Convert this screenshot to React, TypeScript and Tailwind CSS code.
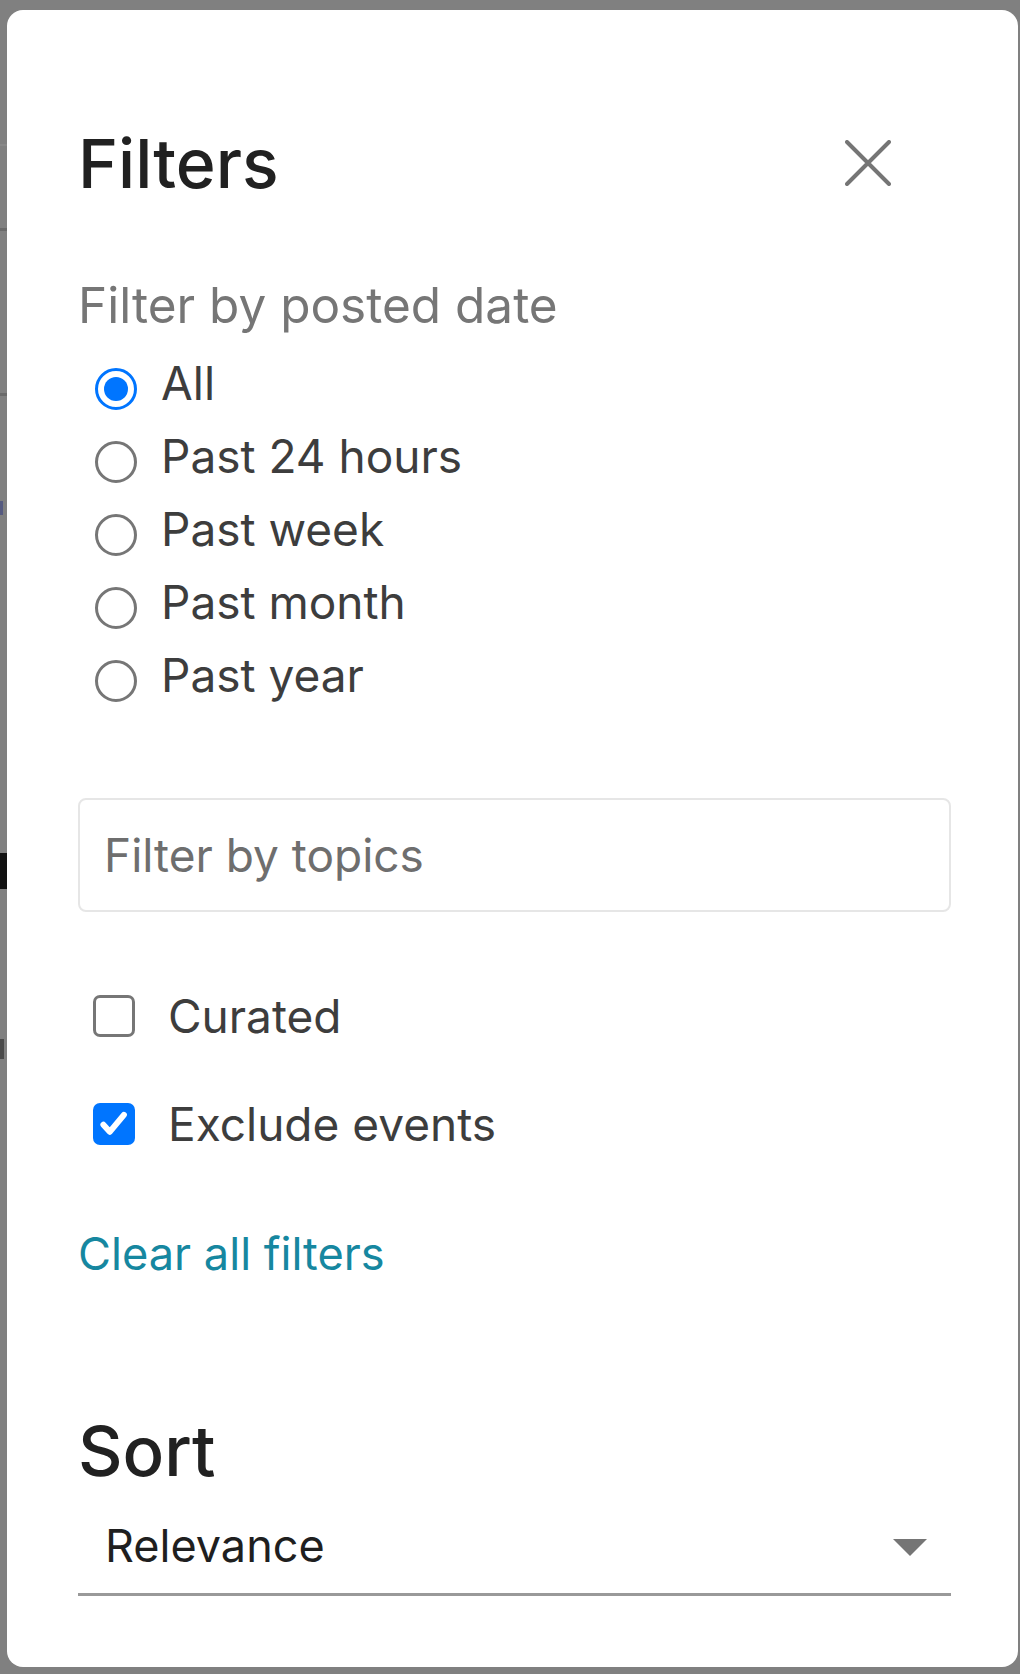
import { useState } from 'react';

const dateOptions = ['All', 'Past 24 hours', 'Past week', 'Past month', 'Past year'];

function Radio({ checked }: { checked: boolean }) {
  if (checked) {
    return (
      <span className="ml-[17px] mt-[21px] flex h-[42px] w-[42px] shrink-0 items-center justify-center self-start rounded-full border-[3.5px] border-[#0075ff] bg-white">
        <span className="h-[24px] w-[24px] rounded-full bg-[#0075ff]" />
      </span>
    );
  }
  return (
    <span className="ml-[17px] mt-[21px] h-[42px] w-[42px] shrink-0 self-start rounded-full border-[3px] border-[#767676] bg-white" />
  );
}

function Checkbox({ checked }: { checked: boolean }) {
  if (checked) {
    return (
      <span className="ml-[15px] flex h-[42px] w-[42px] shrink-0 items-center justify-center rounded-[7px] bg-[#0075ff]">
        <svg viewBox="0 0 24 24" className="h-[34px] w-[34px]" fill="none" stroke="white" strokeWidth="4.2" strokeLinecap="round" strokeLinejoin="round">
          <path d="M4.5 12.5l4.5 5L19 5.5" />
        </svg>
      </span>
    );
  }
  return <span className="ml-[15px] h-[42px] w-[42px] shrink-0 rounded-[7px] border-[3px] border-[#767676] bg-white" />;
}

export default function App() {
  const [date, setDate] = useState('All');
  const [curated, setCurated] = useState(false);
  const [excludeEvents, setExcludeEvents] = useState(true);

  return (
    <div
      className="flex min-h-[1674px] w-[1020px] bg-[#808080] pt-[10px] pb-[7px] pr-[2px]"
      style={{ fontFamily: 'Inter, "Noto Sans", sans-serif' }}
    >
      {/* page behind the overlay, only a sliver shows */}
      <div className="flex w-[7px] shrink-0 flex-col">
        <div className="mt-[134px] h-[2px] bg-[#888]" />
        <div className="mt-[82px] h-[3px] bg-[#6a6a6a]" />
        <div className="mt-[162px] h-[3px] bg-[#6a6a6a]" />
        <div className="mt-[105px] h-[14px] w-[3px] bg-[#555a80]" />
        <div className="mt-[338px] h-[36px] bg-[#111]" />
        <div className="mt-[150px] h-[20px] w-[4px] bg-[#4a4a4a]" />
      </div>

      <div className="flex flex-1 flex-col rounded-[16px] bg-white pl-[71px] pr-[67px] pt-[119px] pb-[70px]">
        {/* header */}
        <div className="flex items-center justify-between">
          <h2 className="text-[68px] leading-[68px] font-medium text-[#212121]">Filters</h2>
          <button className="mr-[60px] flex h-[46px] w-[46px] items-center justify-center" aria-label="Close">
            <svg viewBox="0 0 46 46" className="h-[46px] w-[46px]" fill="none" stroke="#757575" strokeWidth="4" strokeLinecap="round">
              <path d="M2 2L44 44M44 2L2 44" />
            </svg>
          </button>
        </div>

        {/* posted date */}
        <p className="mt-[83px] text-[49.5px] leading-[50px] text-[#767676]">Filter by posted date</p>
        <div className="mt-[17px] flex flex-col">
          {dateOptions.map((opt) => (
            <label key={opt} className="flex h-[73px] cursor-pointer" onClick={() => setDate(opt)}>
              <Radio checked={date === opt} />
              <span className="ml-[24px] text-[46px] leading-[73px] text-[#3d3d3d]">{opt}</span>
            </label>
          ))}
        </div>

        {/* topics */}
        <div className="mt-[86px] flex h-[114px] items-center rounded-[8px] border-2 border-[#e6e6e6] pl-[24px]">
          <input
            placeholder="Filter by topics"
            className="w-full bg-transparent text-[46px] leading-[56px] text-[#333] outline-none placeholder:text-[#6e6e6e]"
          />
        </div>

        {/* checkboxes */}
        <label className="mt-[83px] flex h-[42px] cursor-pointer items-center" onClick={() => setCurated(!curated)}>
          <Checkbox checked={curated} />
          <span className="ml-[33px] text-[46px] leading-[42px] text-[#3d3d3d]">Curated</span>
        </label>
        <label className="mt-[66px] flex h-[42px] cursor-pointer items-center" onClick={() => setExcludeEvents(!excludeEvents)}>
          <Checkbox checked={excludeEvents} />
          <span className="ml-[33px] text-[46px] leading-[42px] text-[#3d3d3d]">Exclude events</span>
        </label>

        <button className="mt-[86px] self-start text-[45.2px] leading-[46px] text-[#1687a0]">Clear all filters</button>

        {/* sort */}
        <h2 className="mt-[140px] text-[69px] leading-[68px] font-medium text-[#212121]">Sort</h2>
        <div className="mt-[38px] flex items-center justify-between border-b-[3px] border-[#999] pl-[27px] pr-[24px] pb-[25px]">
          <span className="text-[45px] leading-[45px] text-[#1f1f1f]">Relevance</span>
          <svg viewBox="0 0 34 17" className="mt-[4px] h-[17px] w-[34px]">
            <path d="M0 0H34L17 17Z" fill="#757575" />
          </svg>
        </div>
      </div>
    </div>
  );
}
